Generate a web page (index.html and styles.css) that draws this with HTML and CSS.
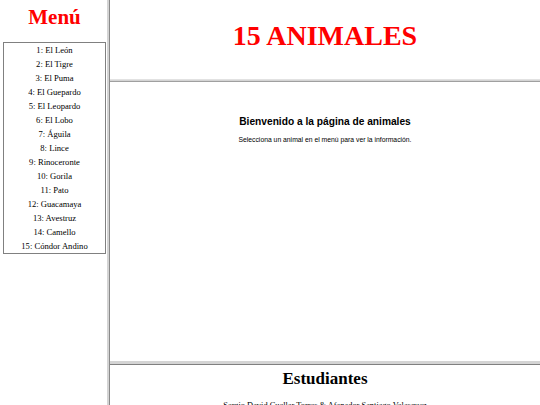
FILE: index.html
```html
<!DOCTYPE html>
<html lang="es">
<head>
<meta charset="utf-8">
<title>15 Animales</title>
<link rel="stylesheet" href="styles.css">
</head>
<body>
<div class="frameset">
  <aside class="menu-frame">
    <h1 class="menu-title">Menú</h1>
    <ul class="menu">
      <li>1: El León</li>
      <li>2: El Tigre</li>
      <li>3: El Puma</li>
      <li>4: El Guepardo</li>
      <li>5: El Leopardo</li>
      <li>6: El Lobo</li>
      <li>7: Águila</li>
      <li>8: Lince</li>
      <li>9: Rinoceronte</li>
      <li>10: Gorila</li>
      <li>11: Pato</li>
      <li>12: Guacamaya</li>
      <li>13: Avestruz</li>
      <li>14: Camello</li>
      <li>15: Cóndor Andino</li>
    </ul>
  </aside>
  <div class="vsep"></div>
  <div class="right">
    <header class="top-frame">
      <h1 class="site-title">15 ANIMALES</h1>
    </header>
    <div class="hsep hsep-top"></div>
    <main class="content-frame">
      <h2 class="welcome">Bienvenido a la página de animales</h2>
      <p class="hint">Selecciona un animal en el menú para ver la información.</p>
    </main>
    <div class="hsep hsep-bottom"></div>
    <footer class="bottom-frame">
      <h2 class="students-title">Estudiantes</h2>
      <p class="students">Sergio David Cuellar Torres &amp; Afanador Santiago Velasquez</p>
    </footer>
  </div>
</div>
</body>
</html>
```

FILE: styles.css
```css
html, body {
  margin: 0;
  padding: 0;
  background: #ffffff;
}

body {
  width: 540px;
  height: 405px;
  overflow: hidden;
  font-family: "Liberation Serif", "Times New Roman", serif;
  color: #000000;
}

.frameset {
  display: grid;
  grid-template-columns: 107px 3px 1fr;
  height: 405px;
}

.menu-frame {
  overflow: hidden;
  padding: 0 1px 0 3px;
}

.menu-title {
  margin: 0;
  padding-top: 4px;
  height: 42px;
  box-sizing: border-box;
  text-align: center;
  color: #ff0000;
  font-size: 21px;
  line-height: 26px;
  font-weight: bold;
}

.menu {
  list-style: none;
  margin: 0;
  padding: 0;
  border: 1px solid #808080;
}

.menu li {
  text-align: center;
  font-size: 8.6px;
  line-height: 14px;
  height: 14px;
}

.vsep {
  background: #d4d4d4;
  border-right: 1px solid #8a8a8a;
}

.right {
  display: grid;
  grid-template-rows: 79px 3px 279px 4px 1fr;
  overflow: hidden;
}

.top-frame {
  display: flex;
  justify-content: center;
  padding-top: 20px;
}

.site-title {
  margin: 0;
  color: #ff0000;
  font-size: 28px;
  line-height: 32px;
  font-weight: bold;
  font-family: "Liberation Serif", Georgia, serif;
}

.hsep {
  background: #d4d4d4;
}

.hsep-top {
  border-top: 1px solid #e2e2e2;
  border-bottom: 1px solid #a0a0a0;
}

.hsep-bottom {
  border-bottom: 1px solid #808080;
}

.content-frame {
  text-align: center;
  font-family: "Liberation Sans", Arial, sans-serif;
  padding-top: 33px;
}

.welcome {
  margin: 0;
  font-size: 10.2px;
  line-height: 14px;
  font-weight: bold;
}

.hint {
  margin: 6px 0 0;
  font-size: 6.8px;
  line-height: 9px;
}

.bottom-frame {
  text-align: center;
  padding-top: 4px;
}

.students-title {
  margin: 0;
  font-size: 17px;
  line-height: 20px;
  font-weight: bold;
}

.students {
  margin: 12px 0 0;
  font-size: 8.4px;
  line-height: 10px;
}
```
